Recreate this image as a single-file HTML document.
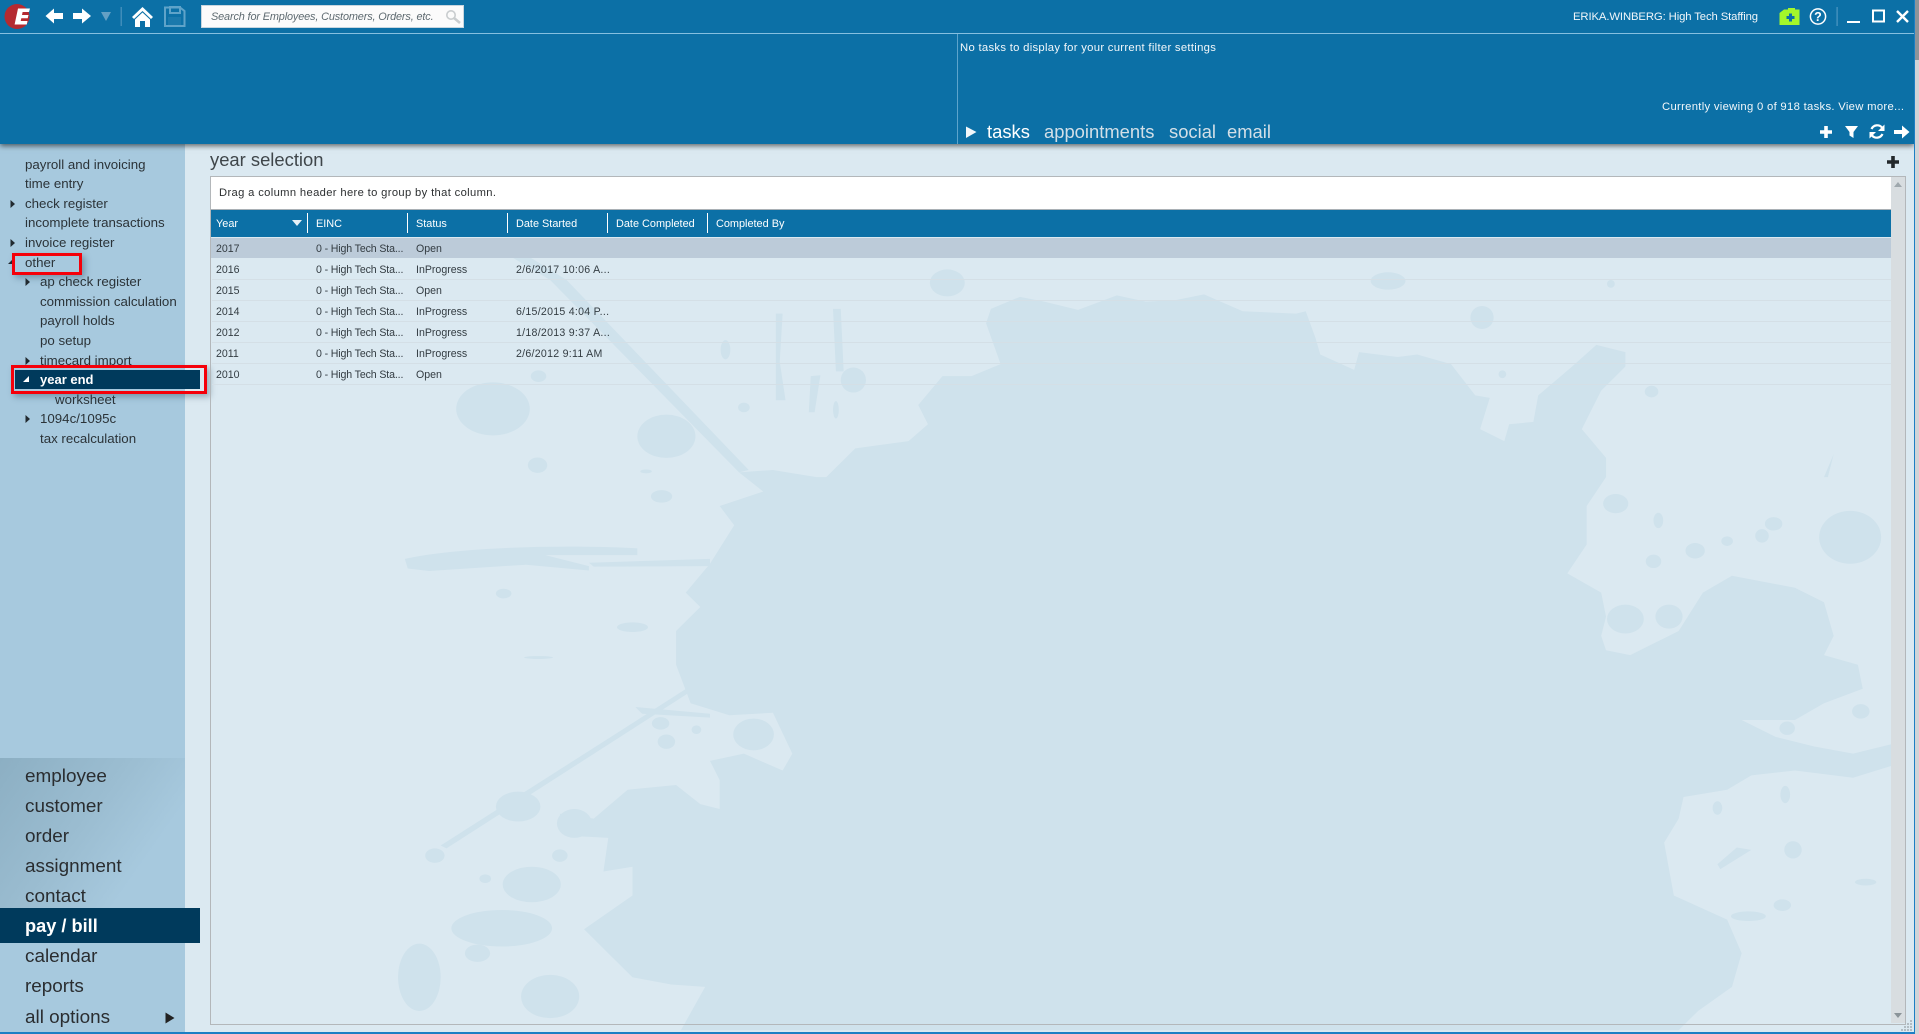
<!DOCTYPE html>
<html><head><meta charset="utf-8"><title>year selection</title>
<style>
html,body{margin:0;padding:0;width:1919px;height:1034px;overflow:hidden;background:#dbe9f1;font-family:"Liberation Sans",Arial,sans-serif}
.a{position:absolute}
.t{position:absolute;white-space:nowrap;line-height:20px;height:20px}
.s{font-size:13.3px;color:#2b3338}
.n{font-size:18.9px;color:#2a2d30;line-height:24px;height:24px}
.c{font-size:10.6px;color:#333c42}
.d{letter-spacing:.27px}
.e{letter-spacing:-.13px}
.h{font-size:10.9px;color:#fff}
.w{font-size:11.2px;color:#f2f7fa}
.tab{font-size:18.4px;color:#d3dfe7;line-height:24px;height:24px}
.sep{position:absolute;top:213px;width:1px;height:20px;background:#fff}
.rowline{position:absolute;left:212px;width:1679px;height:1px;background:#d4dfe6}
</style></head><body>
<!-- content splat -->
<svg class="a" style="left:0;top:0" width="1919" height="1034" viewBox="0 0 1919 1034">
<g transform="translate(400,280) scale(.9687,.4809)" fill="#cfe2ec">
<path d="M610 60L640 35 665 45 700 62 740 32 770 45 800 42 830 30 870 65 925 70 935 65 945 120 950 155 985 187 990 150 1030 160 1050 155 1085 175 1110 240 1125 245 1115 310 1140 335 1145 300 1170 295 1175 240 1210 180 1235 135 1265 150 1265 180 1240 230 1220 310 1245 370 1245 410 1225 470 1225 550 1205 610 1240 650 1245 700 1240 740 1245 770 1270 780 1320 730 1345 650 1375 615 1440 640 1470 670 1480 740 1470 780 1505 800 1510 850 1470 880 1440 915 1385 915 1420 950 1460 970 1500 985 1540 965 1540 1010 1500 1035 1440 1020 1395 1030 1370 1060 1325 1075 1320 1120 1305 1170 1315 1280 1370 1330 1385 1400 1375 1470 1340 1520 1320 1560 290 1560 315 1470 280 1465 240 1450 220 1410 190 1350 240 1280 240 1220 210 1230 215 1160 170 1155 165 1110 200 1120 235 1060 285 1050 310 1090 330 1100 330 1040 320 1000 355 985 395 1020 405 985 385 900 340 905 300 880 285 800 285 730 310 680 295 650 320 590 345 510 330 470 375 440 350 400 385 395 430 410 440 410 470 350 525 335 545 300 535 260 560 200 590 200 620 175 605 90Z"/>
<path d="M155 0L172 0 360 395 350 400Z"/><path d="M105 -60L155 0 172 0 120 -65Z"/>
<path d="M297 848L300 856 48 1182 42 1176Z" />
<path d="M5 580C60 555 170 550 245 558L245 572 150 572 195 595 195 604 130 592 30 605 8 600Z"/>
<path d="M195 588L320 580 320 595 200 596Z"/><path d="M243 888L320 902 320 910 250 902Z"/>
<path d="M447 60L455 60 458 190 450 190Z"/><path d="M388 70L395 70 392 170 398 250 388 250Z"/><path d="M424 200L434 198 428 275 422 275Z"/>
<path d="M1470 410L1480 362 1474 410Z"/><path d="M1363 1225L1395 1185 1380 1180 1360 1215Z"/>
<ellipse cx="96" cy="268" rx="38" ry="55"/><ellipse cx="275" cy="325" rx="30" ry="45"/><ellipse cx="565" cy="6" rx="18" ry="28"/><ellipse cx="1020" cy="2" rx="18" ry="18"/><ellipse cx="1117" cy="78" rx="12" ry="24"/><ellipse cx="468" cy="208" rx="13" ry="26"/><ellipse cx="142" cy="385" rx="10" ry="16"/><ellipse cx="143" cy="200" rx="8" ry="12"/><ellipse cx="1255" cy="465" rx="13" ry="20"/><ellipse cx="1497" cy="535" rx="32" ry="55"/><ellipse cx="1337" cy="563" rx="10" ry="16"/><ellipse cx="1294" cy="585" rx="8" ry="14"/><ellipse cx="1370" cy="543" rx="6" ry="10"/><ellipse cx="1418" cy="507" rx="9" ry="14"/><ellipse cx="1406" cy="532" rx="7" ry="14"/><ellipse cx="365" cy="945" rx="21" ry="33" fill="#dbe9f1"/><ellipse cx="1265" cy="705" rx="19" ry="30" fill="#dbe9f1"/><ellipse cx="1310" cy="700" rx="14" ry="25" fill="#dbe9f1"/><ellipse cx="365" cy="945" rx="21" ry="33"/><ellipse cx="1265" cy="705" rx="19" ry="30"/><ellipse cx="1310" cy="700" rx="14" ry="25"/><ellipse cx="269" cy="922" rx="9" ry="13"/><ellipse cx="275" cy="960" rx="9" ry="15"/><ellipse cx="306" cy="935" rx="5" ry="9"/><ellipse cx="122" cy="1095" rx="23" ry="31"/><ellipse cx="165" cy="1197" rx="8" ry="13"/><ellipse cx="36" cy="1197" rx="10" ry="15"/><ellipse cx="136" cy="1257" rx="30" ry="37"/><ellipse cx="88" cy="1245" rx="6" ry="9"/><ellipse cx="80" cy="1400" rx="13" ry="18"/><ellipse cx="155" cy="1490" rx="30" ry="45"/><ellipse cx="20" cy="1450" rx="22" ry="70"/><ellipse cx="105" cy="1348" rx="52" ry="38"/><ellipse cx="180" cy="1130" rx="18" ry="30"/><ellipse cx="1432" cy="932" rx="8" ry="14"/><ellipse cx="1508" cy="897" rx="9" ry="15"/><ellipse cx="1438" cy="1185" rx="9" ry="18"/><ellipse cx="1427" cy="1300" rx="9" ry="12"/><ellipse cx="1392" cy="1323" rx="18" ry="10"/><ellipse cx="1513" cy="1252" rx="11" ry="7"/><ellipse cx="1430" cy="1070" rx="5" ry="18"/><ellipse cx="1360" cy="1098" rx="5" ry="14"/><ellipse cx="1299" cy="500" rx="5" ry="16"/><ellipse cx="1292" cy="232" rx="7" ry="12"/><ellipse cx="355" cy="265" rx="6" ry="10"/><ellipse cx="450" cy="270" rx="3" ry="18"/><ellipse cx="336" cy="145" rx="5" ry="20"/><ellipse cx="1138" cy="196" rx="4" ry="8"/><ellipse cx="1250" cy="8" rx="4" ry="8"/><ellipse cx="240" cy="722" rx="16" ry="10"/><ellipse cx="107" cy="652" rx="8" ry="10"/><ellipse cx="143" cy="785" rx="15" ry="3"/><ellipse cx="270" cy="450" rx="11" ry="13"/><ellipse cx="254" cy="398" rx="6" ry="4"/>
</g>
</svg>

<!-- sidebar -->
<div class="a" style="left:0;top:144px;width:185px;height:890px;background:#a7c9de"></div>
<div class="a" style="left:0;top:758px;width:185px;height:150px;background:linear-gradient(125deg,#8cafc3 0%,#9bbdd1 45%,#a7c9de 75%)"></div>

<!-- header -->
<div class="a" style="left:0;top:0;width:1914px;height:144px;background:#0c70a6;box-shadow:0 2px 5px rgba(0,0,0,.55)"></div>
<div class="a" style="left:0;top:33px;width:1914px;height:1px;background:#86c0e0"></div>
<div class="a" style="left:957px;top:34px;width:1px;height:110px;background:#5da4cc"></div>

<!-- logo -->
<svg class="a" style="left:0;top:0" width="200" height="34" viewBox="0 0 200 34">
<circle cx="17" cy="16.5" r="12.5" fill="#b42a30"/>
<path d="M18 8.5H30L29 12H22.6L22 15H28.5L27.7 18.3H21.3L20.7 21H27.5L26.8 24.5H14.6Z" fill="#fff"/>
<path d="M63 13H54V8.5L45.5 16 54 23.5V19H63Z" fill="#fff"/>
<path d="M73 13H82V8.5L91 16 82 23.5V19H73Z" fill="#fff"/>
<path d="M101 12H111L106 21Z" fill="#64a0c4"/>
<rect x="120.5" y="7" width="1.5" height="19" fill="#3f8dba"/>
<path d="M132 17L142.5 7 153 17 151 19 142.5 11 134 19Z" fill="#fff"/>
<path d="M135 19.5L142.5 12.5 150 19.5V27H145V21H140V27H135Z" fill="#fff"/>
<path d="M165 7.5H180L184.5 11V26H165Z" fill="none" stroke="#5fa3c9" stroke-width="2"/>
<rect x="170" y="7" width="10" height="6" fill="none" stroke="#5fa3c9" stroke-width="2"/>
<rect x="168" y="17" width="13" height="8" fill="#1b79ac"/>
</svg>

<!-- search -->
<div class="a" style="left:201px;top:5px;width:261px;height:21px;background:#fbfbfb;border:1px solid #c8d6df"></div>
<div class="t" style="left:211px;top:7px;font-size:10.9px;font-style:italic;color:#5e6a70;letter-spacing:-.14px">Search for Employees, Customers, Orders, etc.</div>
<svg class="a" style="left:445px;top:9px" width="16" height="16" viewBox="0 0 16 16"><circle cx="6" cy="6" r="4.2" fill="none" stroke="#c9cdcf" stroke-width="1.6"/><path d="M9 9L15 14" stroke="#c9cdcf" stroke-width="2.6"/></svg>

<!-- top right -->
<div class="t" style="left:1573px;top:7px;font-size:11.3px;color:#f1f6fa;letter-spacing:-.11px">ERIKA.WINBERG: High Tech Staffing</div>
<svg class="a" style="left:1770px;top:0" width="149" height="34" viewBox="0 0 149 34">
<path d="M9.5 13L14 9.5H18V8H25V9.5H29.5V25H9.5Z" fill="#a4f72a"/>
<path d="M16.5 16H19V13.5H22V16H24.5V19H22V21.5H19V19H16.5Z" fill="#0c70a6"/>
<circle cx="48" cy="16.5" r="7.6" fill="none" stroke="#fff" stroke-width="1.5"/>
<text x="48" y="21" font-family="Liberation Sans" font-size="12.5" font-weight="bold" fill="#fff" text-anchor="middle">?</text>
<rect x="66.5" y="7" width="1.2" height="19" fill="#4e97c2"/>
<rect x="77" y="21" width="13" height="2" fill="#fff"/>
<rect x="103" y="10.5" width="11" height="11" fill="none" stroke="#fff" stroke-width="2"/>
<path d="M127 11L138 22M138 11L127 22" stroke="#fff" stroke-width="2.4"/>
</svg>

<!-- notifications -->
<div class="t" style="left:960px;top:38px;font-size:11.3px;color:#f2f7fa;letter-spacing:.29px">No tasks to display for your current filter settings</div>
<div class="t" style="left:1662px;top:97px;font-size:11.3px;color:#f2f7fa;letter-spacing:.29px">Currently viewing 0 of 918 tasks. View more...</div>
<svg class="a" style="left:960px;top:120px" width="20" height="22" viewBox="0 0 20 22"><path d="M6 6.5L16.5 12 6 18Z" fill="#f2f7fa"/></svg>
<div class="t tab" style="left:987px;top:120px;color:#fff">tasks</div>
<div class="t tab" style="left:1044px;top:120px">appointments</div>
<div class="t tab" style="left:1169px;top:120px">social</div>
<div class="t tab" style="left:1227px;top:120px">email</div>
<svg class="a" style="left:1815px;top:120px" width="99" height="24" viewBox="0 0 99 24">
<path d="M9.2 6H12.8V10.2H17V13.8H12.8V18H9.2V13.8H5V10.2H9.2Z" fill="#fff"/>
<path d="M30 6H43L38.5 12V18L34.5 15.5V12Z" fill="#fff"/>
<path d="M56.5 9A6.3 6.3 0 0 1 67 7.5" fill="none" stroke="#fff" stroke-width="2.2"/><path d="M69.5 4.5V11H63Z" fill="#fff"/>
<path d="M67.5 14A6.3 6.3 0 0 1 57 15.5" fill="none" stroke="#fff" stroke-width="2.2"/><path d="M54.5 18.5V12H61Z" fill="#fff"/>
<path d="M79 10H87V5.5L94.5 12 87 18.5V14H79Z" fill="#fff"/>
</svg>

<!-- sidebar list -->
<div class="t s" style="left:25px;top:155px">payroll and invoicing</div>
<div class="t s" style="left:25px;top:174px">time entry</div>
<div class="t s" style="left:25px;top:194px">check register</div>
<div class="t s" style="left:25px;top:213px">incomplete transactions</div>
<div class="t s" style="left:25px;top:233px">invoice register</div>
<div class="t s" style="left:25px;top:253px">other</div>
<div class="t s" style="left:40px;top:272px">ap check register</div>
<div class="t s" style="left:40px;top:292px">commission calculation</div>
<div class="t s" style="left:40px;top:311px">payroll holds</div>
<div class="t s" style="left:40px;top:331px">po setup</div>
<div class="t s" style="left:40px;top:351px">timecard import</div>
<div class="a" style="left:15px;top:370px;width:185px;height:19px;background:#003a5c"></div>
<div class="t s" style="left:40px;top:370px;color:#fff;font-weight:bold;font-size:13px">year end</div>
<div class="t s" style="left:55px;top:390px">worksheet</div>
<div class="t s" style="left:40px;top:409px">1094c/1095c</div>
<div class="t s" style="left:40px;top:429px">tax recalculation</div>
<svg class="a" style="left:0;top:145px" width="40" height="300" viewBox="0 0 40 300">
<path d="M10.5 55L15 59 10.5 63ZM10.5 94L15 98 10.5 102ZM25.5 133L30 137 25.5 141ZM25.5 212L30 216 25.5 220ZM25.5 270L30 274 25.5 278Z" fill="#222a30"/>
<path d="M8 119L14 113V119Z" fill="#222a30"/>
<path d="M23 237L29 231V237Z" fill="#fff"/>
</svg>
<!-- red boxes -->
<div class="a" style="left:12px;top:253px;width:64px;height:16px;border:3px solid #f5000a;box-shadow:3px 3px 6px rgba(30,60,80,.35)"></div>
<div class="a" style="left:11px;top:365px;width:190px;height:23px;border:3px solid #f5000a;box-shadow:3px 3px 6px rgba(30,60,80,.35)"></div>

<!-- bottom nav -->
<div class="t n" style="left:25px;top:765px">employee</div>
<div class="t n" style="left:25px;top:795px">customer</div>
<div class="t n" style="left:25px;top:825px">order</div>
<div class="t n" style="left:25px;top:855px">assignment</div>
<div class="t n" style="left:25px;top:885px">contact</div>
<div class="a" style="left:0;top:908px;width:200px;height:35px;background:#003a5c"></div>
<div class="t n" style="left:25px;top:914px;color:#fff;font-weight:bold;font-size:18.2px">pay / bill</div>
<div class="t n" style="left:25px;top:945px">calendar</div>
<div class="t n" style="left:25px;top:975px">reports</div>
<div class="t n" style="left:25px;top:1006px">all options</div>
<svg class="a" style="left:160px;top:1008px" width="20" height="20" viewBox="0 0 20 20"><path d="M5.5 4.5L14.5 10 5.5 15.5Z" fill="#222"/></svg>

<!-- title -->
<div class="t" style="left:210px;top:149px;font-size:18.4px;color:#3f464a;line-height:22px;height:22px">year selection</div>
<svg class="a" style="left:1886px;top:155px" width="14" height="14" viewBox="0 0 14 14"><path d="M5.2 1H8.8V5.2H13V8.8H8.8V13H5.2V8.8H1V5.2H5.2Z" fill="#23282b"/></svg>

<!-- panel -->
<div class="a" style="left:210px;top:176px;width:1694px;height:847px;border:1px solid #b3b7ba"></div>
<div class="a" style="left:211px;top:177px;width:1680px;height:32px;background:#fff;border-bottom:1px solid #a9b0b5"></div>
<div class="t" style="left:219px;top:183px;font-size:11.2px;color:#2c2f31;letter-spacing:.36px">Drag a column header here to group by that column.</div>
<div class="a" style="left:211px;top:210px;width:1680px;height:27px;background:#0c70a6"></div>
<div class="sep" style="left:307px"></div><div class="sep" style="left:407px"></div><div class="sep" style="left:507px"></div><div class="sep" style="left:607px"></div><div class="sep" style="left:707px"></div>
<div class="t h" style="left:216px;top:214px">Year</div>
<svg class="a" style="left:291px;top:218px" width="12" height="10"><path d="M1 2H11L6 8Z" fill="#e6f0f6"/></svg>
<div class="t h" style="left:316px;top:214px">EINC</div>
<div class="t h" style="left:416px;top:214px">Status</div>
<div class="t h" style="left:516px;top:214px">Date Started</div>
<div class="t h" style="left:616px;top:214px">Date Completed</div>
<div class="t h" style="left:716px;top:214px">Completed By</div>
<div class="a" style="left:211px;top:238px;width:1680px;height:20px;background:#bccbd9"></div>
<div class="rowline" style="top:279px"></div><div class="rowline" style="top:300px"></div><div class="rowline" style="top:321px"></div><div class="rowline" style="top:342px"></div><div class="rowline" style="top:363px"></div><div class="rowline" style="top:384px"></div>

<div class="t c" style="left:216px;top:239px">2017</div><div class="t c e" style="left:316px;top:239px">0 - High Tech Sta...</div><div class="t c" style="left:416px;top:239px">Open</div>
<div class="t c" style="left:216px;top:260px">2016</div><div class="t c e" style="left:316px;top:260px">0 - High Tech Sta...</div><div class="t c" style="left:416px;top:260px">InProgress</div><div class="t c d" style="left:516px;top:260px">2/6/2017 10:06 A...</div>
<div class="t c" style="left:216px;top:281px">2015</div><div class="t c e" style="left:316px;top:281px">0 - High Tech Sta...</div><div class="t c" style="left:416px;top:281px">Open</div>
<div class="t c" style="left:216px;top:302px">2014</div><div class="t c e" style="left:316px;top:302px">0 - High Tech Sta...</div><div class="t c" style="left:416px;top:302px">InProgress</div><div class="t c d" style="left:516px;top:302px">6/15/2015 4:04 P...</div>
<div class="t c" style="left:216px;top:323px">2012</div><div class="t c e" style="left:316px;top:323px">0 - High Tech Sta...</div><div class="t c" style="left:416px;top:323px">InProgress</div><div class="t c d" style="left:516px;top:323px">1/18/2013 9:37 A...</div>
<div class="t c" style="left:216px;top:344px">2011</div><div class="t c e" style="left:316px;top:344px">0 - High Tech Sta...</div><div class="t c" style="left:416px;top:344px">InProgress</div><div class="t c d" style="left:516px;top:344px">2/6/2012 9:11 AM</div>
<div class="t c" style="left:216px;top:365px">2010</div><div class="t c e" style="left:316px;top:365px">0 - High Tech Sta...</div><div class="t c" style="left:416px;top:365px">Open</div>

<!-- scrollbar -->
<div class="a" style="left:1891px;top:177px;width:14px;height:846px;background:#d8dde0"></div>
<svg class="a" style="left:1891px;top:177px" width="14" height="846" viewBox="0 0 14 846"><path d="M3 10H11L7 5Z" fill="#9fa8ad"/><path d="M3 836H11L7 841Z" fill="#8b9499"/></svg>
<!-- grip -->
<svg class="a" style="left:1900px;top:1018px" width="14" height="14" viewBox="0 0 14 14" fill="#b2bcc2"><rect x="10" y="2" width="2" height="2"/><rect x="7" y="5" width="2" height="2"/><rect x="10" y="5" width="2" height="2"/><rect x="4" y="8" width="2" height="2"/><rect x="7" y="8" width="2" height="2"/><rect x="10" y="8" width="2" height="2"/><rect x="1" y="11" width="2" height="2"/><rect x="4" y="11" width="2" height="2"/><rect x="7" y="11" width="2" height="2"/><rect x="10" y="11" width="2" height="2"/></svg>

<!-- window edges -->
<div class="a" style="left:0;top:1032px;width:1915px;height:2px;background:#1c7fc4"></div>
<div class="a" style="left:1914px;top:0;width:1px;height:1034px;background:#1c7fc4"></div>
<div class="a" style="left:1915px;top:0;width:4px;height:1034px;background:#d0d4d7"></div>
<div class="a" style="left:1915px;top:0;width:4px;height:60px;background:#8e9499"></div>
</body></html>
